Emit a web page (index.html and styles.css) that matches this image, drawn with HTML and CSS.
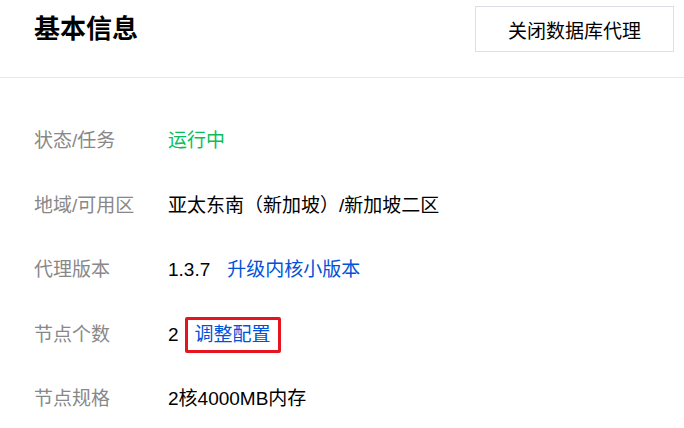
FILE: index.html
```html
<!DOCTYPE html>
<html lang="zh-CN">
<head>
  <meta charset="UTF-8" />
  <meta name="viewport" content="width=device-width, initial-scale=1.0" />
  <title>基本信息</title>
  <link rel="stylesheet" href="styles.css">
</head>
<body>
  <div class="header">
    <h1>基本信息</h1>
    <button class="btn">关闭数据库代理</button>
  </div>

  <div class="info">
    <div class="row">
      <span class="label">状态/任务</span>
      <span class="value running">运行中</span>
    </div>
    <div class="row">
      <span class="label">地域/可用区</span>
      <span class="value">亚太东南（新加坡）/新加坡二区</span>
    </div>
    <div class="row">
      <span class="label">代理版本</span>
      <span class="value">1.3.7<a class="link gap" href="#">升级内核小版本</a></span>
    </div>
    <div class="row">
      <span class="label">节点个数</span>
      <span class="value">2<a class="link marked" href="#">调整配置</a></span>
    </div>
    <div class="row">
      <span class="label">节点规格</span>
      <span class="value">2核4000MB内存</span>
    </div>
  </div>
</body>
</html>
```

FILE: styles.css
```css
body {
  margin: 0;
  font-family: "Liberation Sans", "Noto Sans CJK SC", sans-serif;
  background: #fff;
  color: #000;
}
.header {
  display: flex;
  justify-content: space-between;
  align-items: center;
  height: 78px;
  padding: 0 10px 0 34px;
  border-bottom: 1px solid #e7e8ed;
  box-sizing: border-box;
}
.header h1 {
  margin: 0 0 20px;
  font-size: 26px;
  line-height: 32px;
  font-weight: bold;
  color: #000;
}
.btn {
  width: 199px;
  height: 46px;
  margin-bottom: 19px;
  background: #fff;
  border: 1px solid #dcdfe6;
  font-family: inherit;
  font-size: 19px;
  color: #000;
  cursor: pointer;
}
.info {
  padding: 31px 0 0 34px;
}
.row {
  display: flex;
  align-items: center;
  height: 64.5px;
  font-size: 19px;
  line-height: 24px;
}
.label {
  width: 134px;
  color: #888;
}
.value {
  display: flex;
  align-items: center;
  color: #000;
}
.running {
  color: #0abf5b;
}
.link {
  color: #0052d9;
  text-decoration: none;
}
.gap {
  margin-left: 17px;
}
.marked {
  margin-left: 6px;
  padding: 3px 7px;
  border: 3px solid #e5141f;
  border-radius: 2px;
}
```
